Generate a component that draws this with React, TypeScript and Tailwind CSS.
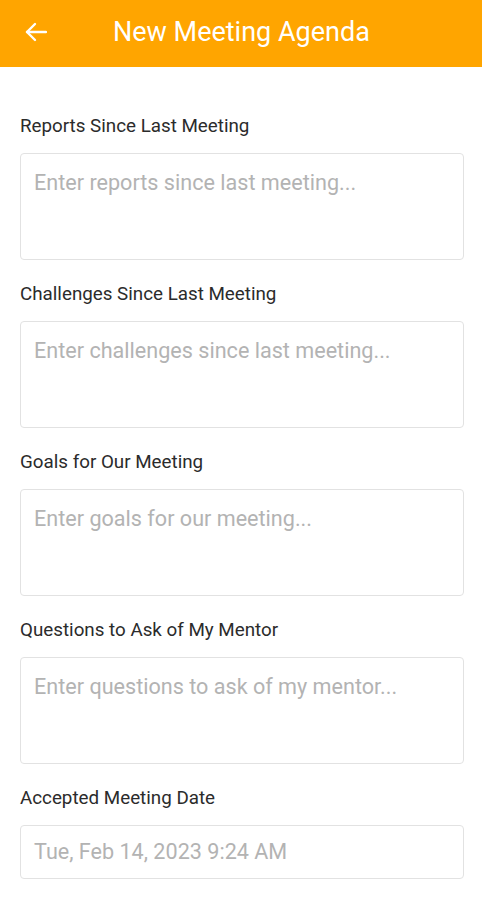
import React from "react";

const fields = [
  { label: "Reports Since Last Meeting", placeholder: "Enter reports since last meeting..." },
  { label: "Challenges Since Last Meeting", placeholder: "Enter challenges since last meeting..." },
  { label: "Goals for Our Meeting", placeholder: "Enter goals for our meeting..." },
  { label: "Questions to Ask of My Mentor", placeholder: "Enter questions to ask of my mentor..." },
];

function BackArrow() {
  return (
    <svg width="22" height="20" viewBox="0 0 22 20" fill="none" stroke="white" strokeWidth="2.4" strokeLinecap="round" strokeLinejoin="round">
      <path d="M21 10H2" />
      <path d="M10 2L2 10l8 8" />
    </svg>
  );
}

export default function App() {
  return (
    <div className="min-h-[900px] w-[482px] bg-white" style={{ fontFamily: "Roboto, 'Liberation Sans', sans-serif" }}>
      {/* Top bar */}
      <header className="flex h-[67px] items-center bg-[#ffa500] pb-[4px] pl-[25px]">
        <BackArrow />
        <h1 className="ml-[66px] text-[27px] leading-[32px] font-normal text-white">New Meeting Agenda</h1>
      </header>

      <div className="flex flex-col pl-[20px] pr-[18px] pt-[49px]">
        {fields.map((f) => (
          <div key={f.label} className="mb-[24px] flex flex-col">
            <label className="h-[21px] text-[18.8px] leading-[21px] text-[#2b2b2b]">{f.label}</label>
            <textarea
              placeholder={f.placeholder}
              className="mt-[16px] h-[107px] w-full resize-none rounded-[4px] border border-[#e2e2e2] px-[13px] py-[16px] text-[21.6px] leading-[25px] text-[#333] placeholder:text-[#b3b3b3] outline-none"
            />
          </div>
        ))}
        <div className="flex flex-col">
          <label className="h-[21px] text-[18.8px] leading-[21px] text-[#2b2b2b]">Accepted Meeting Date</label>
          <div className="mt-[16px] flex h-[54px] w-full items-center rounded-[4px] border border-[#e2e2e2] px-[13px] text-[21.6px] text-[#b3b3b3]">
            Tue, Feb 14, 2023 9:24 AM
          </div>
        </div>
      </div>
    </div>
  );
}
